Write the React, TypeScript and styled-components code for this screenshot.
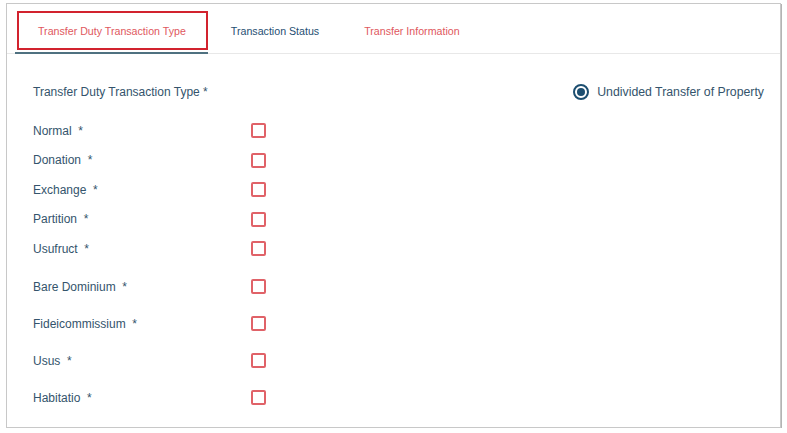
import styled, { createGlobalStyle } from 'styled-components';

const GlobalStyle = createGlobalStyle`
  html, body {
    margin: 0;
    padding: 0;
    background: #ffffff;
    font-family: "Liberation Sans", Arial, sans-serif;
  }
`;

const TABS = [
  { label: 'Transfer Duty Transaction Type', tone: 'red', active: true },
  { label: 'Transaction Status', tone: 'blue', active: false },
  { label: 'Transfer Information', tone: 'red', active: false },
];

const SHORT_ROWS = ['Normal', 'Donation', 'Exchange', 'Partition', 'Usufruct'];
const TALL_ROWS = ['Bare Dominium', 'Fideicommissium', 'Usus', 'Habitatio'];

export default function App() {
  return (
    <>
      <GlobalStyle />
      <Frame>
        <TabBar>
          {TABS.map((t) => (
            <Tab key={t.label} $active={t.active} $tone={t.tone}>
              {t.label}
              {t.active && <Highlight />}
            </Tab>
          ))}
        </TabBar>
        <Content>
          <HeaderRow>
            <Label>Transfer Duty Transaction Type *</Label>
            <RadioOption>
              <RadioRing>
                <RadioDot />
              </RadioRing>
              Undivided Transfer of Property
            </RadioOption>
          </HeaderRow>
          <Group>
            {SHORT_ROWS.map((r, i) => (
              <Row key={r} $h={i % 2 === 0 ? 29 : 30}>
                <Label $fixed>{r}&nbsp; *</Label>
                <Box />
              </Row>
            ))}
          </Group>
          <Group $gap>
            {TALL_ROWS.map((r) => (
              <Row key={r} $h={37}>
                <Label $fixed>{r}&nbsp; *</Label>
                <Box />
              </Row>
            ))}
          </Group>
        </Content>
      </Frame>
    </>
  );
}

const Frame = styled.div`
  margin: 3px 0 0 6px;
  width: 775px;
  height: 425px;
  border: 1px solid #c8c8c8;
  box-shadow: 1px 1px 0 #b4b4b4;
  background: #fff;
  box-sizing: border-box;
`;

const TabBar = styled.div`
  display: flex;
  height: 49px;
  padding-left: 8px;
  border-bottom: 1px solid #e8e8e8;
`;

const Tab = styled.div<{ $active: boolean; $tone: string }>`
  position: relative;
  display: flex;
  align-items: center;
  padding: 5px 22px 0 23px;
  font-size: 10.65px;
  color: ${(p) => (p.$tone === 'red' ? '#e0585e' : '#1f4f73')};
  border-bottom: 2px solid ${(p) => (p.$active ? '#4f7180' : 'transparent')};
  margin-bottom: -1px;
  white-space: nowrap;
`;

const Highlight = styled.div`
  position: absolute;
  left: 2px;
  right: 0;
  top: 7px;
  bottom: 2px;
  border: 2.5px solid #d2232e;
`;

const Content = styled.div`
  padding: 28px 16px 0 26px;
`;

const HeaderRow = styled.div`
  display: flex;
  justify-content: space-between;
  align-items: center;
  height: 20px;
  margin-bottom: 14px;
`;

const Label = styled.span<{ $fixed?: boolean }>`
  font-size: 12px;
  color: #34546c;
  white-space: nowrap;
  ${(p) => (p.$fixed ? 'width: 218px;' : '')}
`;

const RadioOption = styled.label`
  display: flex;
  align-items: center;
  gap: 8px;
  font-size: 12.3px;
  color: #34546c;
`;

const RadioRing = styled.span`
  width: 16px;
  height: 16px;
  border: 2px solid #1c4e70;
  border-radius: 50%;
  box-sizing: border-box;
  display: flex;
  align-items: center;
  justify-content: center;
`;

const RadioDot = styled.span`
  width: 8px;
  height: 8px;
  border-radius: 50%;
  background: #1c4e70;
`;

const Group = styled.div<{ $gap?: boolean }>`
  display: flex;
  flex-direction: column;
  margin-top: ${(p) => (p.$gap ? '5px' : '0')};
`;

const Row = styled.div<{ $h: number }>`
  display: flex;
  align-items: center;
  height: ${(p) => p.$h}px;
`;

const Box = styled.span`
  display: block;
  width: 15px;
  height: 15px;
  border: 2px solid #e06268;
  border-radius: 2px;
  box-sizing: border-box;
  background: #fff;
`;
